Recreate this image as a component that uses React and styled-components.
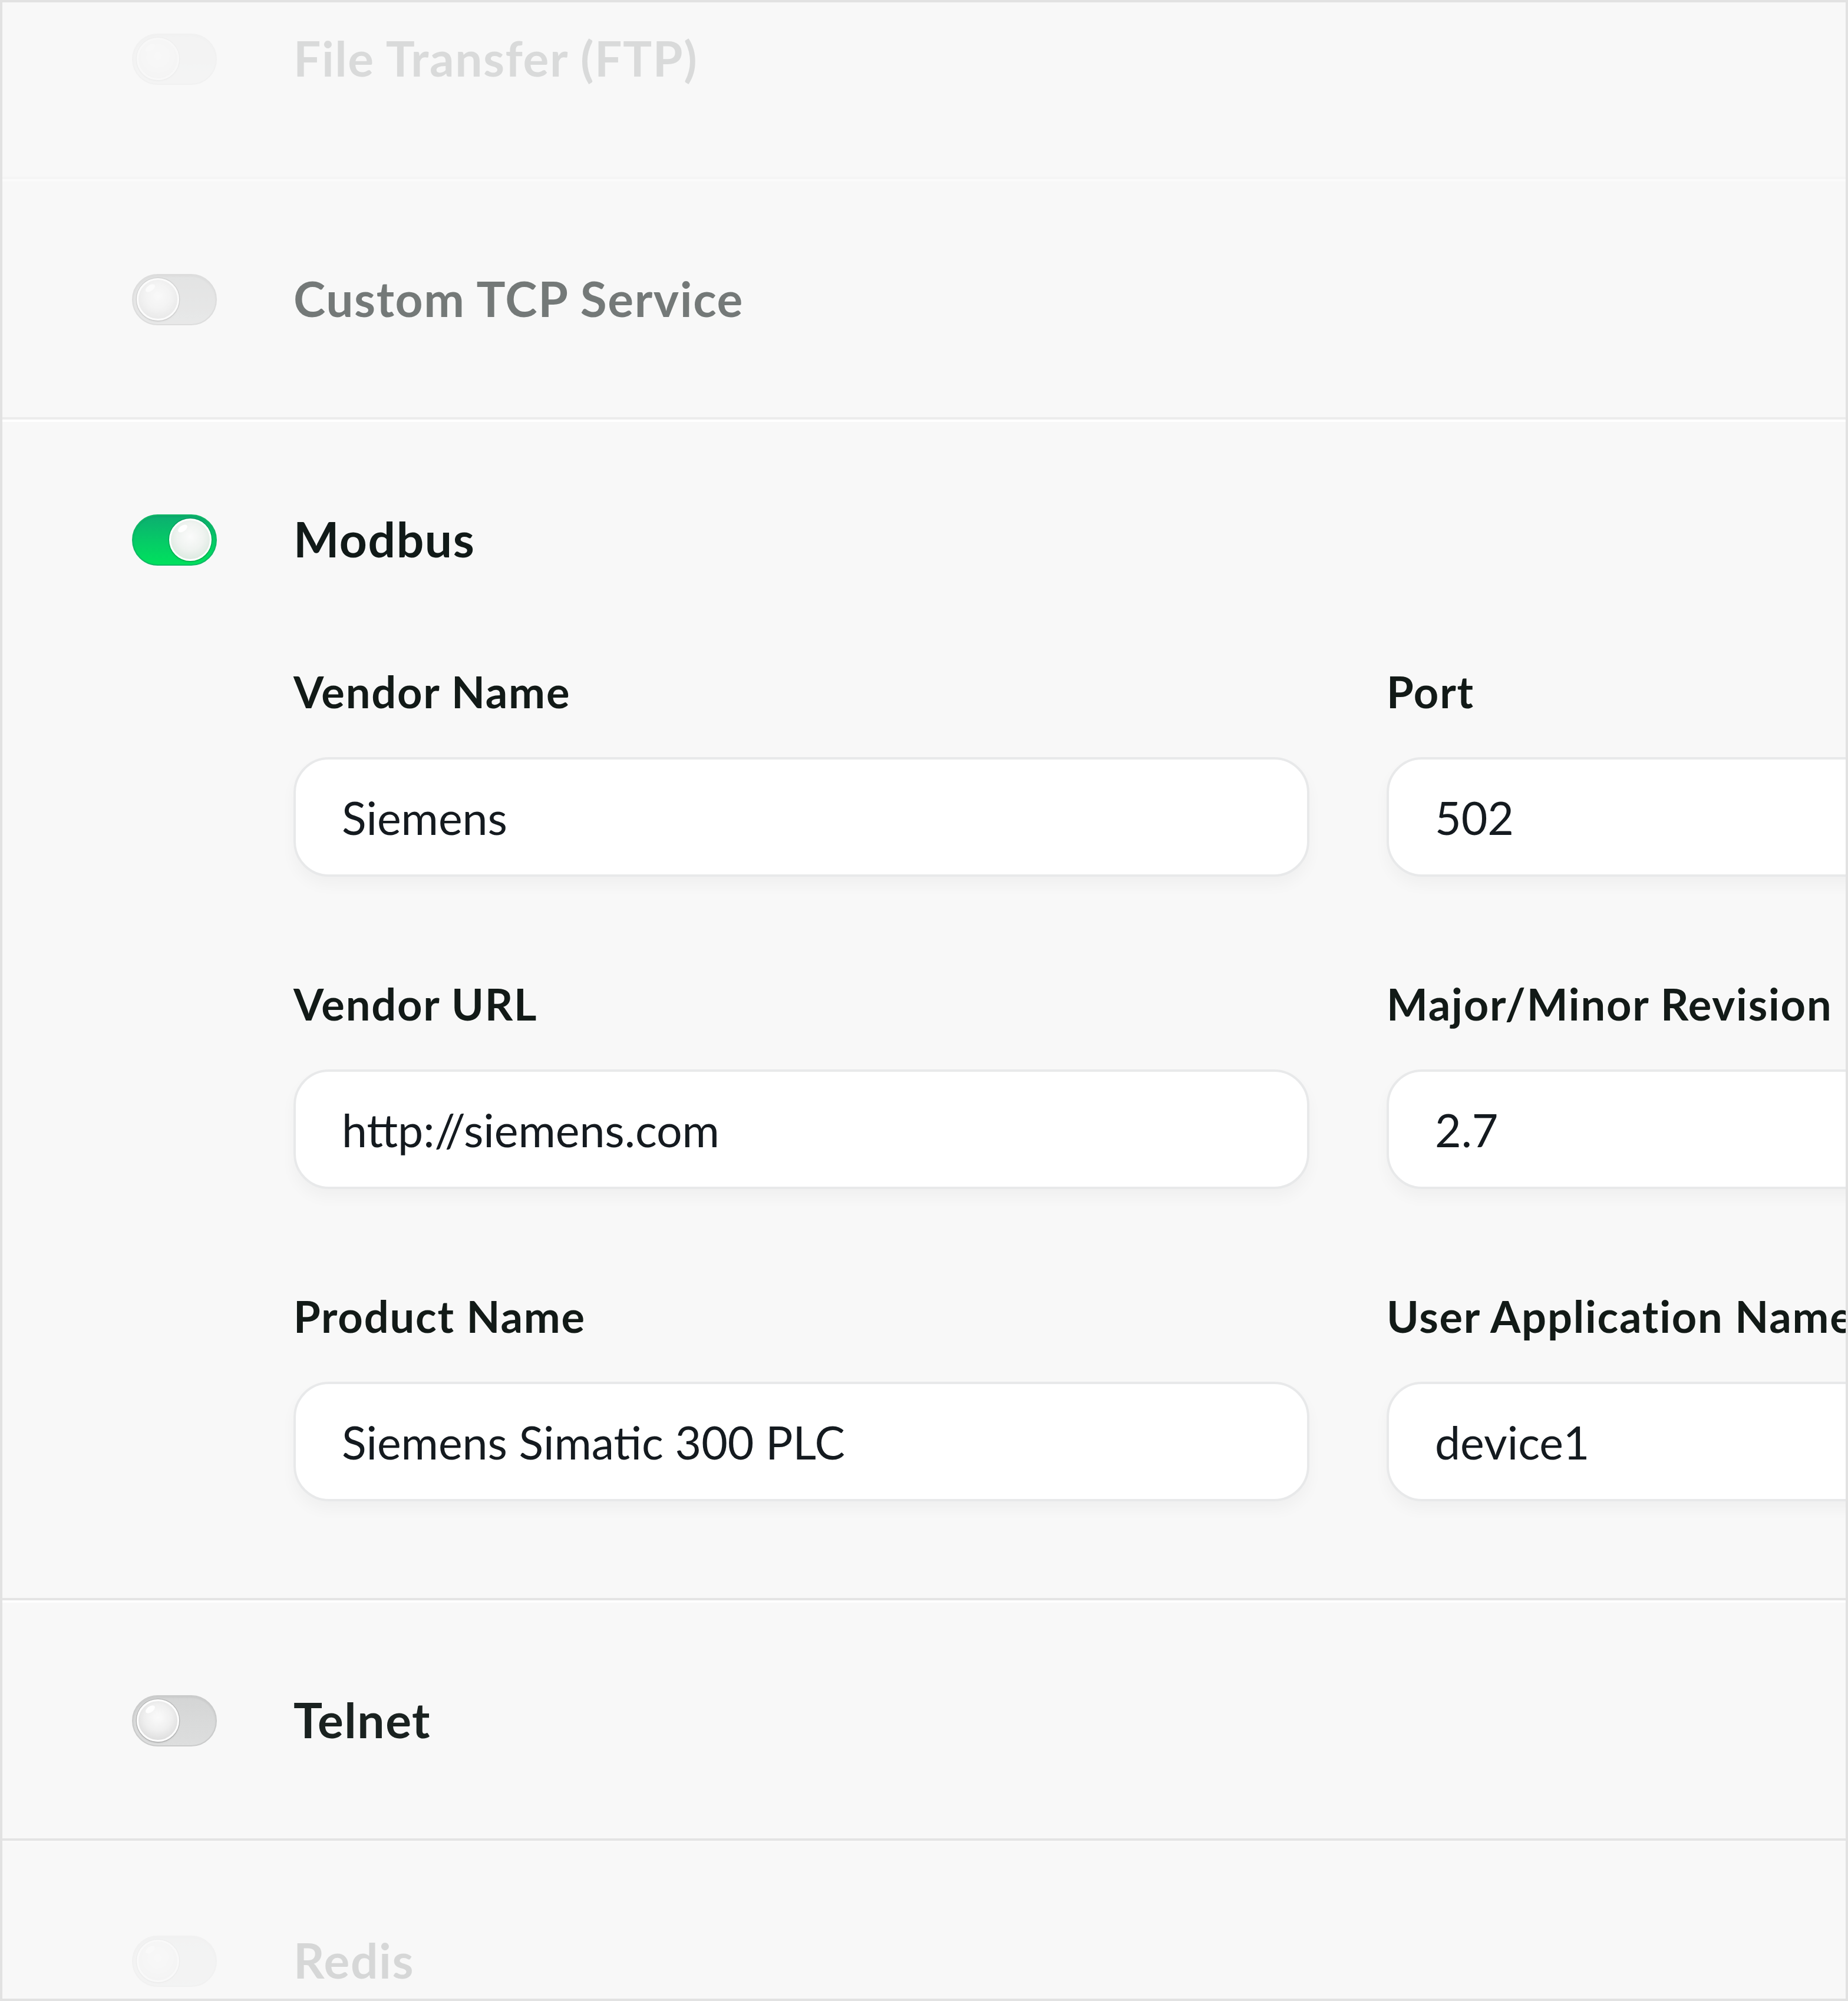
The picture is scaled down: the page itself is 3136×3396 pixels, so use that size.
import React from 'react'
import styled, { createGlobalStyle } from 'styled-components'

const GlobalStyle = createGlobalStyle`
  html, body {
    margin: 0;
    padding: 0;
    background: #f8f8f8;
  }
  * {
    box-sizing: border-box;
  }
`

// list of services, only modbus is open
const services = [
  { id: 'ftp', name: 'File Transfer (FTP)', on: false, fade: 0.13 },
  { id: 'tcp', name: 'Custom TCP Service', on: false, fade: 0.57 },
  {
    id: 'modbus',
    name: 'Modbus',
    on: true,
    fade: 1,
    fields: [
      { label: 'Vendor Name', value: 'Siemens' },
      { label: 'Port', value: '502' },
      { label: 'Vendor URL', value: 'http://siemens.com' },
      { label: 'Major/Minor Revision', value: '2.7' },
      { label: 'Product Name', value: 'Siemens Simatic 300 PLC' },
      { label: 'User Application Name', value: 'device1' },
    ],
  },
  { id: 'telnet', name: 'Telnet', on: false, fade: 0.96 },
  { id: 'redis', name: 'Redis', on: false, fade: 0.14 },
]

const Toggle = ({ on }) => {
  return (
    <Track $on={on}>
      <Knob $on={on} />
    </Track>
  )
}

const App = () => {
  return (
    <>
      <GlobalStyle />
      <Frame>
        <List>
          {services.map((service) => {
            return (
              <Row key={service.id} $fade={service.fade}>
                <Header>
                  <Toggle on={service.on} />
                  <Title>{service.name}</Title>
                </Header>
                {service.fields ? (
                  <Form>
                    {service.fields.map((field) => (
                      <Field key={field.label}>
                        <Label>{field.label}</Label>
                        <Input readOnly defaultValue={field.value} />
                      </Field>
                    ))}
                  </Form>
                ) : null}
              </Row>
            )
          })}
        </List>
      </Frame>
    </>
  )
}

const Frame = styled.div`
  width: 3136px;
  height: 3396px;
  border: 4px solid #e2e2e2;
  background: #f8f8f8;
  overflow: hidden;
  font-family: Lato, 'Noto Sans', sans-serif;
  color: #121a18;
`

const List = styled.div`
  margin-top: -108px;
  display: flex;
  flex-direction: column;
`

const Row = styled.section`
  border-top: 4px solid #ffffff;
  border-bottom: 4px solid #e4e4e4;
  opacity: ${(p) => p.$fade};
`

const Header = styled.div`
  height: 400px;
  display: flex;
  align-items: center;
  gap: 130px;
  padding-left: 220px;
`

const Title = styled.h2`
  margin: 0 0 4px;
  font-size: 82px;
  line-height: 1;
  font-weight: 700;
  letter-spacing: 1.6px;
  color: #111a18;
`

const Track = styled.span`
  flex: none;
  width: 144px;
  height: 87px;
  border-radius: 44px;
  display: flex;
  align-items: center;
  justify-content: ${(p) => (p.$on ? 'flex-end' : 'flex-start')};
  padding: 0 ${(p) => (p.$on ? '7px' : '6px')};
  border: 2px solid ${(p) => (p.$on ? '#0fb866' : '#c9caca')};
  background: ${(p) =>
    p.$on
      ? 'linear-gradient(180deg, #0cae70 0%, #05cc66 55%, #00e15d 100%)'
      : 'linear-gradient(180deg, #d3d4d4 0%, #dcdddd 100%)'};
  box-shadow: inset 0 2px 3px rgba(0, 0, 0, 0.06);
`

const Knob = styled.span`
  position: relative;
  width: 72px;
  height: 72px;
  border-radius: 50%;
  border: 3px solid #ffffff;
  background: ${(p) =>
    p.$on
      ? 'radial-gradient(circle at 50% 42%, #fbfbfb 0%, #eff3f0 45%, #cfe2d6 100%)'
      : 'radial-gradient(circle at 50% 42%, #fbfbfb 0%, #efefef 45%, #d2d2d2 100%)'};
  box-shadow: 0 0 0 1.5px rgba(0, 0, 0, 0.13), 0 2px 3px rgba(0, 0, 0, 0.12);

  &::before {
    content: '';
    position: absolute;
    top: 9px;
    left: 11px;
    width: 18px;
    height: 10px;
    border-radius: 50%;
    background: rgba(255, 255, 255, 0.95);
    transform: rotate(-35deg);
  }
`

const Form = styled.div`
  display: grid;
  grid-template-columns: 1724px 1724px;
  column-gap: 131px;
  row-gap: 179px;
  padding: 21px 0 164px 494px;
`

const Field = styled.div`
  display: flex;
  flex-direction: column;
`

const Label = styled.label`
  display: block;
  margin-bottom: 74px;
  font-size: 74px;
  line-height: 1;
  font-weight: 700;
  letter-spacing: 1.8px;
  white-space: nowrap;
  color: #121a17;
`

const Input = styled.input`
  width: 100%;
  height: 203px;
  padding: 0 0 0 78px;
  border: 4px solid #e8e9ea;
  border-radius: 60px;
  background: #ffffff;
  box-shadow: 0 14px 26px rgba(0, 0, 0, 0.035);
  font-family: Lato, 'Noto Sans', sans-serif;
  font-size: 77px;
  font-weight: 400;
  color: #141a1f;
  outline: none;
`

export default App
